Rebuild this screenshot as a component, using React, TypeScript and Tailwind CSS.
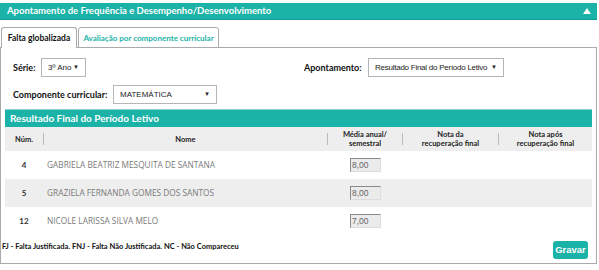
import React from "react";

const teal = "bg-[#1bb2a7]";

function Sel({ w, text, tight }: { w: string; text: string; tight?: boolean }) {
  return (
    <div
      className={`${w} h-[19px] border border-[#b5b5b5] bg-white flex items-center justify-between pl-[6px] pr-[6px] text-[8px] text-[#222] whitespace-nowrap overflow-hidden font-['Liberation_Sans',Arial,sans-serif]`}
    >
      <span className={tight ? "tracking-[-0.25px]" : ""}>{text}</span>
      <span className="text-[6px]">▼</span>
    </div>
  );
}

const rows = [
  { n: "4", name: "GABRIELA BEATRIZ MESQUITA DE SANTANA", v: "8,00", bg: "bg-white" },
  { n: "5", name: "GRAZIELA FERNANDA GOMES DOS SANTOS", v: "8,00", bg: "bg-[#eeeeee]" },
  { n: "12", name: "NICOLE LARISSA SILVA MELO", v: "7,00", bg: "bg-white" },
];

export default function App() {
  const head = "font-['Lato','Noto_Sans',sans-serif] font-bold whitespace-nowrap";
  return (
    <div className="w-[599px] h-[270px] bg-white relative overflow-hidden font-['Open_Sans',sans-serif]">
      <div className="w-[597px] pt-[3px]">
        <div className={`${teal} h-[17px] border-b border-[#159990] flex items-center justify-between pl-[7px] pr-[6px]`}>
          <span className={`${head} text-white text-[9.5px]`}>
            Apontamento de Frequência e Desempenho/Desenvolvimento
          </span>
          <span className="w-0 h-0 border-l-[4px] border-r-[4px] border-b-[6px] border-l-transparent border-r-transparent border-b-white" />
        </div>

        {/* tabs */}
        <div className="flex pl-[1px] mt-[7px] h-[21px] items-end relative z-10">
          <div className={`h-[21px] w-[76px] border border-b-0 border-[#aaaaaa] bg-white rounded-t-[3px] flex items-center justify-center ${head} text-[8.5px] text-[#111]`}>
            Falta globalizada
          </div>
          <div className={`h-[21px] w-[141px] ml-[1px] border border-[#aaaaaa] bg-white rounded-t-[3px] flex items-center justify-center ${head} text-[8px] text-[#1bb2a7]`}>
            Avaliação por componente curricular
          </div>
        </div>

        {/* panel */}
        <div className="-mt-[1px] border border-[#aaaaaa] h-[217px] w-[597px] flex flex-col px-[4px]">
          <div className="flex items-center mt-[10px] h-[19px]">
            <span className={`${head} text-[9px] text-[#111] ml-[8px] w-[28px]`}>Série:</span>
            <Sel w="w-[45px]" text="3º Ano" />
            <span className={`${head} text-[9px] text-[#111] ml-[218px] w-[64px]`}>Apontamento:</span>
            <Sel w="w-[136px]" text="Resultado Final do Período Letivo" tight />
          </div>
          <div className="flex items-center mt-[8px] h-[19px]">
            <span className={`${head} text-[9px] text-[#111] ml-[8px] w-[100px]`}>Componente curricular:</span>
            <Sel w="w-[104px]" text="MATEMÁTICA" />
          </div>

          <div className="mt-[5px] border-t border-[#8fd6d0]">
            <div className={`${teal} h-[17px] flex items-center pl-[5px] ${head} text-white text-[10px]`}>
              Resultado Final do Período Letivo
            </div>
            <div className={`bg-[#eeeeee] h-[24px] flex items-center ${head} text-[7.5px] text-[#222] leading-[9px]`}>
              <div className="w-[38px] text-center">Núm.</div>
              <div className="w-px h-[12px] bg-[#bbbbbb]" />
              <div className="w-[283px] text-center">Nome</div>
              <div className="w-px h-[12px] bg-[#bbbbbb]" />
              <div className="w-[74px] text-center">Média anual/<br />semestral</div>
              <div className="w-px h-[12px] bg-[#bbbbbb]" />
              <div className="w-[95px] text-center">Nota da<br />recuperação final</div>
              <div className="w-px h-[12px] bg-[#bbbbbb]" />
              <div className="flex-1 text-center">Nota após<br />recuperação final</div>
            </div>
            {rows.map((r) => (
              <div key={r.n} className={`${r.bg} h-[28px] flex items-center`}>
                <div className={`w-[38px] text-center ${head} text-[8px] text-[#333]`}>{r.n}</div>
                <div className="w-[307px] pl-[4px] text-[8.3px] text-[#7a7a7a]">{r.name}</div>
                <div className="w-[31px] h-[14px] bg-[#ebebeb] border-t border-l border-[#8a8a8a] border-r border-b border-r-[#dddddd] border-b-[#dddddd] text-[8.5px] leading-[12px] text-[#666] font-['Liberation_Sans',Arial,sans-serif] pl-[1px]">
                  {r.v}
                </div>
              </div>
            ))}
          </div>

          <div className="flex items-end justify-between mt-[6px] pr-[4px]">
            <span className={`${head} text-[7.5px] text-[#111] -ml-[3px] mb-[8px]`}>
              FJ - Falta Justificada. FNJ - Falta Não Justificada. NC - Não Compareceu
            </span>
            <div className={`${teal} rounded-[3px] h-[18px] w-[35px] flex items-center justify-center text-white text-[9.5px] font-bold font-['Liberation_Sans',Arial,sans-serif] mb-[1px]`}>
              Gravar
            </div>
          </div>
        </div>
      </div>
    </div>
  );
}
